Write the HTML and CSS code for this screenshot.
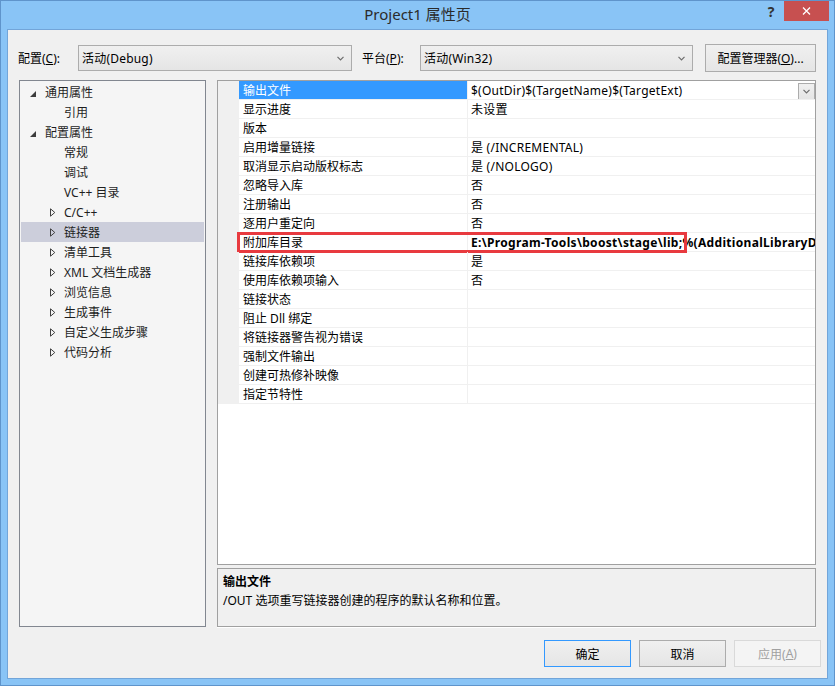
FILE: index.html
```html
<!DOCTYPE html>
<html>
<head>
<meta charset="utf-8">
<title>Project1 属性页</title>
<link rel="stylesheet" href="styles.css">
</head>
<body>
<div class="window">
  <div class="titlebar">
    <div class="title">Project1 属性页</div>
    <div class="controls">
      <div class="help">?</div>
      <div class="close"><svg width="9" height="8" viewBox="0 0 9 8"><path d="M1 0.5 L8 7.5 M8 0.5 L1 7.5" stroke="#fff" stroke-width="1.3" fill="none"/></svg></div>
    </div>
  </div>
  <div class="client">
    <div class="toolbar">
      <span class="lbl lbl-config">配置(<u>C</u>):</span>
      <div class="combo combo-config"><span>活动(Debug)</span><svg class="chev" width="7" height="5" viewBox="0 0 7 5"><path d="M0.5 0.8 L3.5 3.8 L6.5 0.8" stroke="#6d6d6d" stroke-width="1.2" fill="none"/></svg></div>
      <span class="lbl lbl-platform">平台(<u>P</u>):</span>
      <div class="combo combo-platform"><span>活动(Win32)</span><svg class="chev" width="7" height="5" viewBox="0 0 7 5"><path d="M0.5 0.8 L3.5 3.8 L6.5 0.8" stroke="#6d6d6d" stroke-width="1.2" fill="none"/></svg></div>
      <div class="btn btn-mgr">配置管理器(<u>O</u>)...</div>
    </div>
    <div class="main">
      <div class="tree">
        <div class="node l0"><span class="arrow"><svg width="6" height="6" viewBox="0 0 6 6"><path d="M6 0 L6 6 L0 6 Z" fill="#3c3c3c"/></svg></span><span>通用属性</span></div>
        <div class="node l1"><span class="arrow"></span><span>引用</span></div>
        <div class="node l0"><span class="arrow"><svg width="6" height="6" viewBox="0 0 6 6"><path d="M6 0 L6 6 L0 6 Z" fill="#3c3c3c"/></svg></span><span>配置属性</span></div>
        <div class="node l1"><span class="arrow"></span><span>常规</span></div>
        <div class="node l1"><span class="arrow"></span><span>调试</span></div>
        <div class="node l1"><span class="arrow"></span><span>VC++ 目录</span></div>
        <div class="node l1"><span class="arrow"><svg width="7" height="9" viewBox="0 0 7 9"><path d="M1.5 0.8 L5.8 4.5 L1.5 8.2 Z" fill="none" stroke="#404040" stroke-width="1"/></svg></span><span>C/C++</span></div>
        <div class="node l1 selected"><span class="arrow"><svg width="7" height="9" viewBox="0 0 7 9"><path d="M1.5 0.8 L5.8 4.5 L1.5 8.2 Z" fill="none" stroke="#404040" stroke-width="1"/></svg></span><span>链接器</span></div>
        <div class="node l1"><span class="arrow"><svg width="7" height="9" viewBox="0 0 7 9"><path d="M1.5 0.8 L5.8 4.5 L1.5 8.2 Z" fill="none" stroke="#404040" stroke-width="1"/></svg></span><span>清单工具</span></div>
        <div class="node l1"><span class="arrow"><svg width="7" height="9" viewBox="0 0 7 9"><path d="M1.5 0.8 L5.8 4.5 L1.5 8.2 Z" fill="none" stroke="#404040" stroke-width="1"/></svg></span><span>XML 文档生成器</span></div>
        <div class="node l1"><span class="arrow"><svg width="7" height="9" viewBox="0 0 7 9"><path d="M1.5 0.8 L5.8 4.5 L1.5 8.2 Z" fill="none" stroke="#404040" stroke-width="1"/></svg></span><span>浏览信息</span></div>
        <div class="node l1"><span class="arrow"><svg width="7" height="9" viewBox="0 0 7 9"><path d="M1.5 0.8 L5.8 4.5 L1.5 8.2 Z" fill="none" stroke="#404040" stroke-width="1"/></svg></span><span>生成事件</span></div>
        <div class="node l1"><span class="arrow"><svg width="7" height="9" viewBox="0 0 7 9"><path d="M1.5 0.8 L5.8 4.5 L1.5 8.2 Z" fill="none" stroke="#404040" stroke-width="1"/></svg></span><span>自定义生成步骤</span></div>
        <div class="node l1"><span class="arrow"><svg width="7" height="9" viewBox="0 0 7 9"><path d="M1.5 0.8 L5.8 4.5 L1.5 8.2 Z" fill="none" stroke="#404040" stroke-width="1"/></svg></span><span>代码分析</span></div>
      </div>
      <div class="right">
        <div class="grid">
          <div class="row"><div class="gut"></div><div class="name sel">输出文件</div><div class="val">$(OutDir)$(TargetName)$(TargetExt)<div class="dd"><svg width="7" height="5" viewBox="0 0 7 5"><path d="M0.5 0.8 L3.5 3.8 L6.5 0.8" stroke="#6d6d6d" stroke-width="1.2" fill="none"/></svg></div></div></div>
          <div class="row"><div class="gut"></div><div class="name">显示进度</div><div class="val">未设置</div></div>
          <div class="row"><div class="gut"></div><div class="name">版本</div><div class="val"></div></div>
          <div class="row"><div class="gut"></div><div class="name">启用增量链接</div><div class="val">是 (/INCREMENTAL)</div></div>
          <div class="row"><div class="gut"></div><div class="name">取消显示启动版权标志</div><div class="val">是 (/NOLOGO)</div></div>
          <div class="row"><div class="gut"></div><div class="name">忽略导入库</div><div class="val">否</div></div>
          <div class="row"><div class="gut"></div><div class="name">注册输出</div><div class="val">否</div></div>
          <div class="row"><div class="gut"></div><div class="name">逐用户重定向</div><div class="val">否</div></div>
          <div class="row marked"><div class="gut"></div><div class="name">附加库目录</div><div class="val bold">E:\Program-Tools\boost\stage\lib;%(AdditionalLibraryDirectories)</div><div class="redbox"></div></div>
          <div class="row"><div class="gut"></div><div class="name">链接库依赖项</div><div class="val">是</div></div>
          <div class="row"><div class="gut"></div><div class="name">使用库依赖项输入</div><div class="val">否</div></div>
          <div class="row"><div class="gut"></div><div class="name">链接状态</div><div class="val"></div></div>
          <div class="row"><div class="gut"></div><div class="name">阻止 Dll 绑定</div><div class="val"></div></div>
          <div class="row"><div class="gut"></div><div class="name">将链接器警告视为错误</div><div class="val"></div></div>
          <div class="row"><div class="gut"></div><div class="name">强制文件输出</div><div class="val"></div></div>
          <div class="row"><div class="gut"></div><div class="name">创建可热修补映像</div><div class="val"></div></div>
          <div class="row"><div class="gut"></div><div class="name">指定节特性</div><div class="val"></div></div>
        </div>
        <div class="desc">
          <div class="desc-title">输出文件</div>
          <div class="desc-text">/OUT 选项重写链接器创建的程序的默认名称和位置。</div>
        </div>
      </div>
    </div>
    <div class="footer">
      <div class="btn fbtn default">确定</div>
      <div class="btn fbtn">取消</div>
      <div class="btn fbtn disabled">应用(<u>A</u>)</div>
    </div>
  </div>
</div>
</body>
</html>
```
FILE: styles.css
```css
* { box-sizing: border-box; margin: 0; padding: 0; }
html, body { width: 835px; height: 686px; overflow: hidden; }
body {
  font-family: "Noto Sans", "Noto Sans CJK SC", sans-serif;
  font-size: 12px;
  color: #000;
  background: #fff;
}
.window {
  width: 835px;
  height: 686px;
  background: #89c4f6;
  border: 1px solid #5f94cb;
  display: flex;
  flex-direction: column;
}
.titlebar {
  height: 28px;
  display: grid;
  grid-template-columns: 1fr auto 1fr;
  align-items: start;
}
.title {
  grid-column: 2;
  font-size: 15px;
  line-height: 27px;
  color: #2b2b2b;
  white-space: nowrap;
}
.controls {
  grid-column: 3;
  justify-self: end;
  display: flex;
  margin-right: 5px;
}
.help {
  width: 26px;
  height: 20px;
  text-align: center;
  font-weight: bold;
  font-size: 14px;
  line-height: 22px;
  color: #333;
}
.close {
  width: 45px;
  height: 20px;
  background: #c75050;
  display: flex;
  align-items: center;
  justify-content: center;
}
.client {
  flex: 1;
  margin: 0 6px 6px;
  background: #f0f0f0;
  border: 1px solid #72a5d9;
  display: flex;
  flex-direction: column;
}
.toolbar {
  display: flex;
  align-items: center;
  height: 28px;
  margin-top: 14px;
  padding-left: 10px;
}
.lbl { white-space: nowrap; }
.lbl-config { width: 60px; }
.lbl-platform { width: 58px; margin-left: 10px; }
.combo {
  height: 26px;
  border: 1px solid #acacac;
  background: linear-gradient(#f0f0f0, #e5e5e5);
  display: flex;
  align-items: center;
  justify-content: space-between;
  padding: 0 7px 0 3px;
  letter-spacing: 0.2px;
}
.combo-config { width: 274px; }
.combo-platform { width: 273px; }
.btn {
  border: 1px solid #acacac;
  background: linear-gradient(#f0f0f0, #e5e5e5);
  display: flex;
  align-items: center;
  justify-content: center;
  white-space: nowrap;
}
.btn-mgr { width: 111px; height: 28px; margin-left: 12px; }
.main {
  display: flex;
  gap: 11px;
  padding: 0 11px;
  margin-top: 8px;
}
.tree {
  width: 187px;
  height: 547px;
  border: 1px solid #828790;
  background: #f5f5f5;
  padding: 1px;
  color: #1e1e1e;
}
.node {
  height: 20px;
  display: flex;
  align-items: center;
  white-space: nowrap;
}
.node.l0 { padding-left: 9px; }
.node.l1 { padding-left: 28px; }
.node .arrow {
  width: 15px;
  display: flex;
  align-items: center;
}
.node.l0 .arrow svg { margin-top: 3px; }
.node.selected { background: #cccedb; }
.right {
  width: 599px;
  display: flex;
  flex-direction: column;
  gap: 3px;
}
.grid {
  height: 485px;
  border: 1px solid #a0a0a0;
  background: #fff;
  overflow: hidden;
}
.row {
  position: relative;
  height: 19px;
  display: grid;
  grid-template-columns: 21px 229px 1fr;
  border-bottom: 1px solid #f0f0f0;
  line-height: 18px;
}
.gut { background: #f0f0f0; }
.name {
  padding-left: 4px;
  padding-top: 1px;
  border-right: 1px solid #f0f0f0;
  white-space: nowrap;
  overflow: hidden;
}
.name.sel { background: #3399ff; color: #fff; }
.val {
  position: relative;
  padding-left: 3px;
  padding-top: 1px;
  white-space: nowrap;
  overflow: hidden;
  letter-spacing: 0.25px;
}
.val.bold { font-weight: bold; letter-spacing: 0.32px; }
.dd {
  position: absolute;
  right: 0;
  top: 2px;
  width: 17px;
  height: 17px;
  border: 1px solid #acacac;
  background: linear-gradient(#f0f0f0, #e5e5e5);
  display: flex;
  align-items: center;
  justify-content: center;
}
.redbox {
  position: absolute;
  left: 19px;
  top: -1px;
  width: 450px;
  height: 21px;
  border: 3px solid #e83a3f;
  pointer-events: none;
}
.desc {
  height: 59px;
  border: 1px solid #a0a0a0;
  box-shadow: 0 1px 0 #fff;
  padding: 3px 5px;
  line-height: 19px;
}
.desc-title { font-weight: bold; }
.footer {
  display: flex;
  justify-content: flex-end;
  gap: 8px;
  margin-top: 13px;
  padding-right: 6px;
}
.fbtn { width: 87px; height: 27px; }
.fbtn.default { border-color: #3399ff; }
.fbtn.disabled {
  border-color: #d9d9d9;
  background: #f4f4f4;
  color: #a0a0a0;
}
```
